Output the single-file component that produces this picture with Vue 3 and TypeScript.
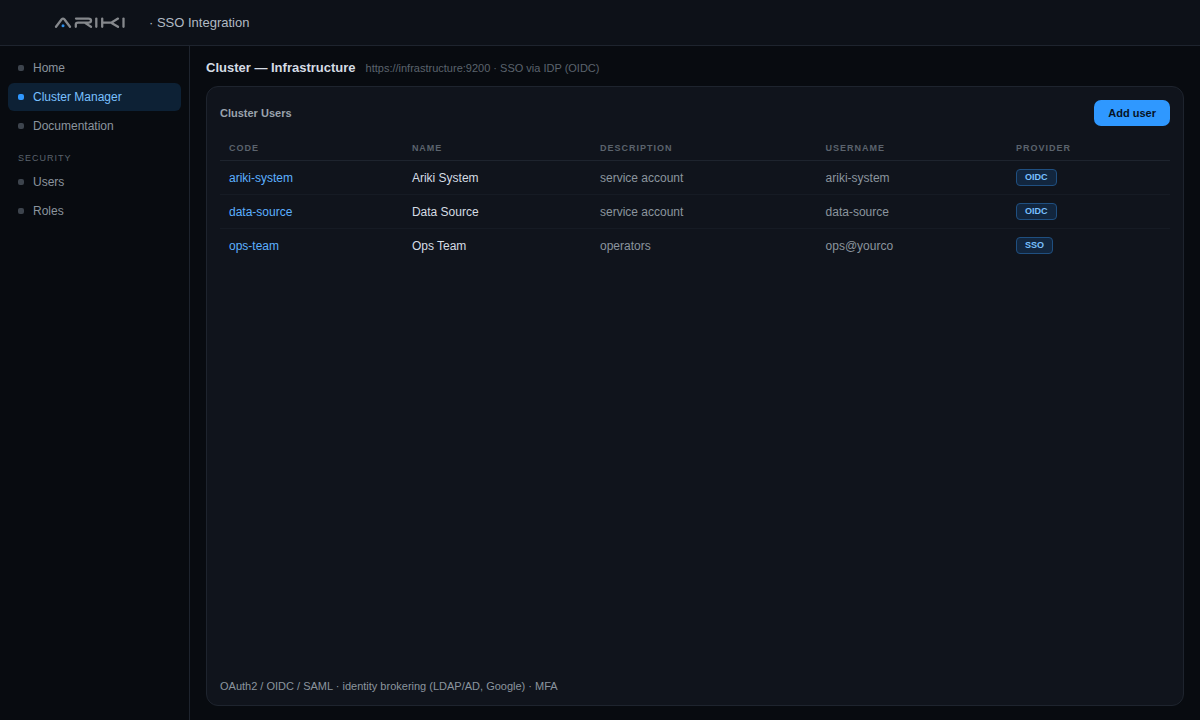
<script setup lang="ts">
interface NavItem {
  label: string
  active?: boolean
}

interface ClusterUser {
  code: string
  name: string
  description: string
  username: string
  provider: string
}

const mainNav: NavItem[] = [
  { label: 'Home' },
  { label: 'Cluster Manager', active: true },
  { label: 'Documentation' },
]

const securityNav: NavItem[] = [{ label: 'Users' }, { label: 'Roles' }]

const columns: string[] = ['Code', 'Name', 'Description', 'Username', 'Provider']

const users: ClusterUser[] = [
  { code: 'ariki-system', name: 'Ariki System', description: 'service account', username: 'ariki-system', provider: 'OIDC' },
  { code: 'data-source', name: 'Data Source', description: 'service account', username: 'data-source', provider: 'OIDC' },
  { code: 'ops-team', name: 'Ops Team', description: 'operators', username: 'ops@yourco', provider: 'SSO' },
]
</script>

<template>
  <div class="app">
    <header class="topbar">
      <svg class="logo" viewBox="0 0 72 12" role="img" aria-label="Ariki">
        <g fill="none" stroke="#85888c" stroke-width="2.3" stroke-linecap="round" stroke-linejoin="round">
          <path d="M2 9.8 L7.7 2.3 Q9 0.8 10.3 2.3 L16 9.8" />
          <path d="M22 1.6 H34.5 Q37 1.6 37 3.6 Q37 5.7 34.5 5.7 H24 Q21.8 5.7 21.8 7.6 V9.8 M31 5.9 L37 9.8" />
          <path d="M42.3 1.6 V9.8" />
          <path d="M48.2 1.6 V9.8 M48.2 5.7 H56.5 M64 1.6 L58 5.2 Q57.2 5.7 58 6.2 L64 9.8" />
          <path d="M69.5 1.6 V9.8" />
        </g>
        <circle cx="9" cy="8.8" r="1.5" fill="#2f8fe8" />
      </svg>
      <span class="product">· SSO Integration</span>
    </header>

    <div class="body">
      <nav class="sidebar" aria-label="Main">
        <a v-for="item in mainNav" :key="item.label" href="#" class="nav-item" :class="{ active: item.active }">
          <span class="dot"></span>{{ item.label }}
        </a>
        <div class="nav-group">SECURITY</div>
        <a v-for="item in securityNav" :key="item.label" href="#" class="nav-item">
          <span class="dot"></span>{{ item.label }}
        </a>
      </nav>

      <main class="content">
        <div class="heading">
          <h1>Cluster — Infrastructure</h1>
          <span class="subtitle">https://infrastructure:9200 · SSO via IDP (OIDC)</span>
        </div>

        <section class="panel">
          <div class="panel-head">
            <h2>Cluster Users</h2>
            <button type="button" class="add">Add user</button>
          </div>
          <table>
            <colgroup>
              <col class="c-code" />
              <col class="c-name" />
              <col class="c-desc" />
              <col class="c-user" />
              <col />
            </colgroup>
            <thead>
              <tr>
                <th v-for="column in columns" :key="column" scope="col">{{ column }}</th>
              </tr>
            </thead>
            <tbody>
              <tr v-for="user in users" :key="user.code">
                <td><a href="#" class="code">{{ user.code }}</a></td>
                <td class="name">{{ user.name }}</td>
                <td>{{ user.description }}</td>
                <td>{{ user.username }}</td>
                <td><span class="badge">{{ user.provider }}</span></td>
              </tr>
            </tbody>
          </table>
          <p class="note">OAuth2 / OIDC / SAML · identity brokering (LDAP/AD, Google) · MFA</p>
        </section>
      </main>
    </div>
  </div>
</template>

<style>
body {
  margin: 0;
  background: #080b10;
}
</style>

<style scoped>
.app {
  display: flex;
  flex-direction: column;
  min-height: 100vh;
  box-sizing: border-box;
  font-family: 'Liberation Sans', Arial, sans-serif;
  color: #8b949e;
  background: #080b10;
}
.topbar {
  display: flex;
  align-items: center;
  gap: 23px;
  height: 45px;
  padding: 0 54px;
  background: #0d1118;
  border-bottom: 1px solid #1e242e;
}
.logo {
  width: 72px;
  height: 12px;
}
.product {
  font-size: 13px;
  color: #b1bac4;
}
.body {
  display: flex;
  flex: 1;
}
.sidebar {
  display: flex;
  flex-direction: column;
  gap: 1px;
  flex: 0 0 173px;
  padding: 8px;
  border-right: 1px solid #1e242e;
}
.nav-item {
  display: flex;
  align-items: center;
  gap: 9px;
  height: 28px;
  padding: 0 10px;
  border-radius: 6px;
  font-size: 12px;
  color: #8b949e;
  text-decoration: none;
}
.dot {
  width: 6px;
  height: 6px;
  border-radius: 2px;
  background: #3d444d;
}
.nav-item.active {
  background: #0d2135;
  color: #79c0ff;
}
.nav-item.active .dot {
  background: #2f98ff;
}
.nav-group {
  padding: 12px 10px 4px;
  font-size: 9px;
  line-height: 10px;
  letter-spacing: 1px;
  color: #5b636d;
}
.content {
  display: flex;
  flex-direction: column;
  flex: 1;
  min-width: 0;
  gap: 10px;
  padding: 14px 16px;
}
.heading {
  display: flex;
  align-items: baseline;
  gap: 10px;
  line-height: 16px;
}
h1 {
  margin: 0;
  font-size: 13px;
  color: #d5dce4;
}
.subtitle {
  font-size: 11px;
  color: #5b636d;
}
.panel {
  display: flex;
  flex-direction: column;
  flex: 1;
  padding: 13px;
  background: #10141c;
  border: 1px solid #1e242e;
  border-radius: 12px;
}
.panel-head {
  display: flex;
  align-items: center;
  justify-content: space-between;
  margin-bottom: 10px;
}
h2 {
  margin: 0;
  font-size: 11px;
  color: #9aa3ad;
}
.add {
  height: 26px;
  padding: 0 14px;
  border: 0;
  border-radius: 7px;
  background: #2f98ff;
  color: #06121f;
  font-family: inherit;
  font-size: 11px;
  font-weight: 700;
}
table {
  width: 100%;
  table-layout: fixed;
  border-collapse: collapse;
}
.c-code {
  width: 19.25%;
}
.c-name {
  width: 19.8%;
}
.c-desc {
  width: 23.75%;
}
.c-user {
  width: 20.05%;
}
th {
  height: 24px;
  padding: 0 9px;
  text-align: left;
  font-size: 9px;
  letter-spacing: 1px;
  text-transform: uppercase;
  color: #5b636d;
  border-bottom: 1px solid #1e242e;
}
td {
  height: 33px;
  padding: 0 9px;
  font-size: 12px;
  border-bottom: 1px solid #161b24;
}
tr:last-child td {
  border-bottom: 0;
}
.code {
  color: #5cb0ff;
  text-decoration: none;
}
.name {
  color: #d5dce4;
}
.badge {
  display: inline-block;
  padding: 0 8px;
  border: 1px solid #1f4f80;
  border-radius: 4px;
  background: #12263e;
  color: #79c0ff;
  font-size: 9px;
  font-weight: 700;
  line-height: 15px;
  vertical-align: middle;
}
.note {
  margin: auto 0 0;
  font-size: 11px;
  line-height: 12px;
}
</style>
